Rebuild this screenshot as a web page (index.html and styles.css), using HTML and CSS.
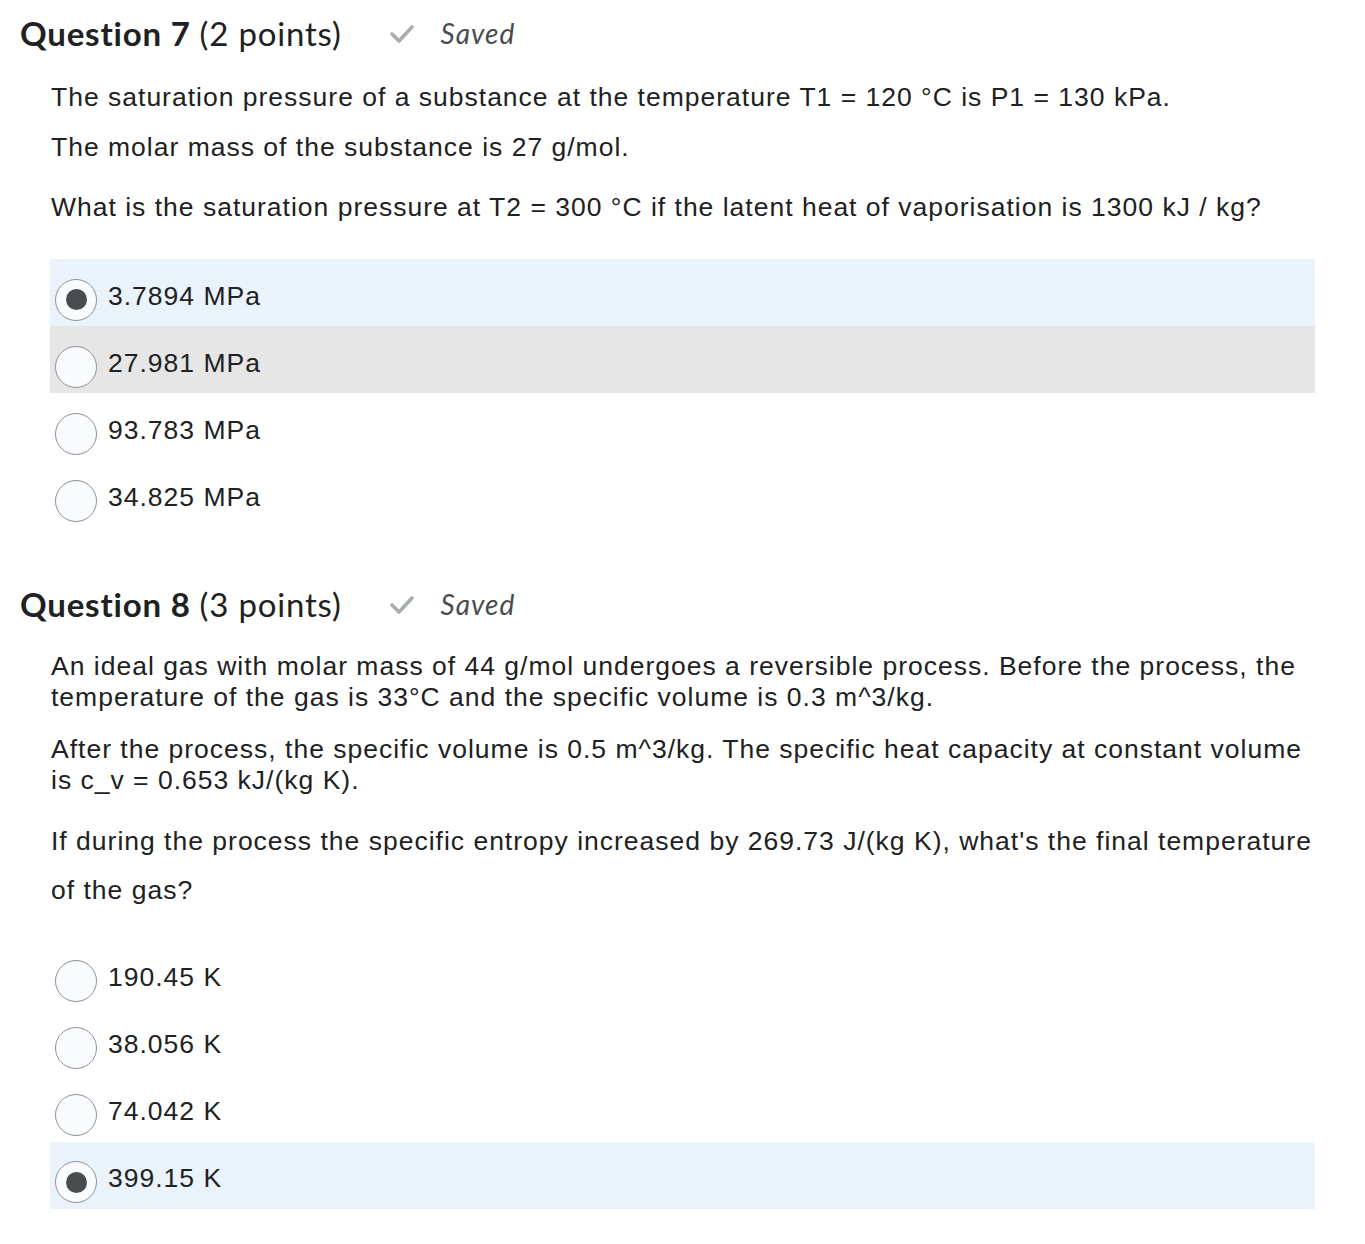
FILE: index.html
```html
<!DOCTYPE html>
<html>
<head>
<meta charset="utf-8">
<link rel="stylesheet" href="styles.css">
</head>
<body>
<section class="question q7">
  <h2 class="qhead"><span class="qtitle">Question 7</span><span class="qpts">(2 points)</span>
    <span class="saved"><svg class="check" width="26" height="20" viewBox="0 0 26 20"><polyline points="3,10 10,17 23,3" fill="none" stroke="#a7adb0" stroke-width="3.6" stroke-linecap="round" stroke-linejoin="round"/></svg><em>Saved</em></span>
  </h2>
  <div class="body">
    <p class="p7a">The saturation pressure of a substance at the temperature T1 = 120 °C is P1 = 130 kPa.</p>
    <p class="p7b">The molar mass of the substance is 27 g/mol.</p>
    <p class="p7c">What is the saturation pressure at T2 = 300 °C if the latent heat of vaporisation is 1300 kJ / kg?</p>
  </div>
  <div class="options o7">
    <div class="opt sel"><span class="radio on"></span><span class="lbl">3.7894 MPa</span></div>
    <div class="opt hover"><span class="radio"></span><span class="lbl">27.981 MPa</span></div>
    <div class="opt"><span class="radio"></span><span class="lbl">93.783 MPa</span></div>
    <div class="opt"><span class="radio"></span><span class="lbl">34.825 MPa</span></div>
  </div>
</section>
<section class="question q8">
  <h2 class="qhead"><span class="qtitle">Question 8</span><span class="qpts">(3 points)</span>
    <span class="saved"><svg class="check" width="26" height="20" viewBox="0 0 26 20"><polyline points="3,10 10,17 23,3" fill="none" stroke="#a7adb0" stroke-width="3.6" stroke-linecap="round" stroke-linejoin="round"/></svg><em>Saved</em></span>
  </h2>
  <div class="body">
    <p class="p8a">An ideal gas with molar mass of 44 g/mol undergoes a reversible process. Before the process, the temperature of the gas is 33°C and the specific volume is 0.3 m^3/kg.</p>
    <p class="p8b">After the process, the specific volume is 0.5 m^3/kg. The specific heat capacity at constant volume is c_v = 0.653 kJ/(kg K).</p>
    <p class="p8c">If during the process the specific entropy increased by 269.73 J/(kg K), what's the final temperature of the gas?</p>
  </div>
  <div class="options o8">
    <div class="opt"><span class="radio"></span><span class="lbl">190.45 K</span></div>
    <div class="opt"><span class="radio"></span><span class="lbl">38.056 K</span></div>
    <div class="opt"><span class="radio"></span><span class="lbl">74.042 K</span></div>
    <div class="opt sel"><span class="radio on"></span><span class="lbl">399.15 K</span></div>
  </div>
</section>
</body>
</html>
```
FILE: styles.css
```css
html, body {
  margin: 0;
  padding: 0;
  background: #ffffff;
}
body {
  color: #202122;
  font-family: "Liberation Sans", Arial, sans-serif;
  font-size: 26.5px;
  letter-spacing: 1px;
}
.question {
  width: 1315px;
}
.q7 { padding-top: 13px; }
.q8 { padding-top: 57px; }
.qhead {
  margin: 0;
  padding-left: 20px;
  font-family: Lato, sans-serif;
  font-size: 33px;
  letter-spacing: 0.8px;
  line-height: 40px;
  font-weight: 400;
  color: #202122;
  display: flex;
  align-items: center;
}
.qtitle { font-weight: 700; margin-right: 9px; }
.qpts { font-weight: 400; }
.saved {
  display: inline-flex;
  align-items: center;
  margin-left: 47px;
  color: #494c4e;
}
.check { margin-right: 26px; margin-top: 2px; }
.saved em {
  font-family: Lato, sans-serif;
  font-style: italic;
  font-size: 28px;
  letter-spacing: 1px;
}
.body {
  padding-left: 51px;
}
.body p {
  margin: 0;
  line-height: 31px;
}
.p7a { padding-top: 28.5px; }
.p7b { padding-top: 19px; }
.p7c { padding-top: 29px; }
.p8a { padding-top: 26.5px; }
.p8b { padding-top: 21px; }
.p8c { padding-top: 21px; line-height: 49px !important; }
.options {
  margin-left: 50px;
  width: 1265px;
}
.o7 { margin-top: 36.5px; }
.o8 { margin-top: 26px; }
.opt {
  box-sizing: border-box;
  height: 67px;
  padding: 7px 0 0 5px;
  display: flex;
  align-items: center;
}
.opt.sel { background: #eaf2fc; }
.opt.hover { background: #e6e6e6; }
.radio {
  box-sizing: border-box;
  width: 42px;
  height: 42px;
  border-radius: 50%;
  border: 1.5px solid #8f9396;
  background: #fafbff;
  margin-top: 7px;
  margin-right: 11px;
  display: flex;
  align-items: center;
  justify-content: center;
  flex: none;
}
.radio.on::after {
  content: "";
  width: 21px;
  height: 21px;
  border-radius: 50%;
  background: #494c4e;
}
.lbl {
  line-height: 31px;
}
```
